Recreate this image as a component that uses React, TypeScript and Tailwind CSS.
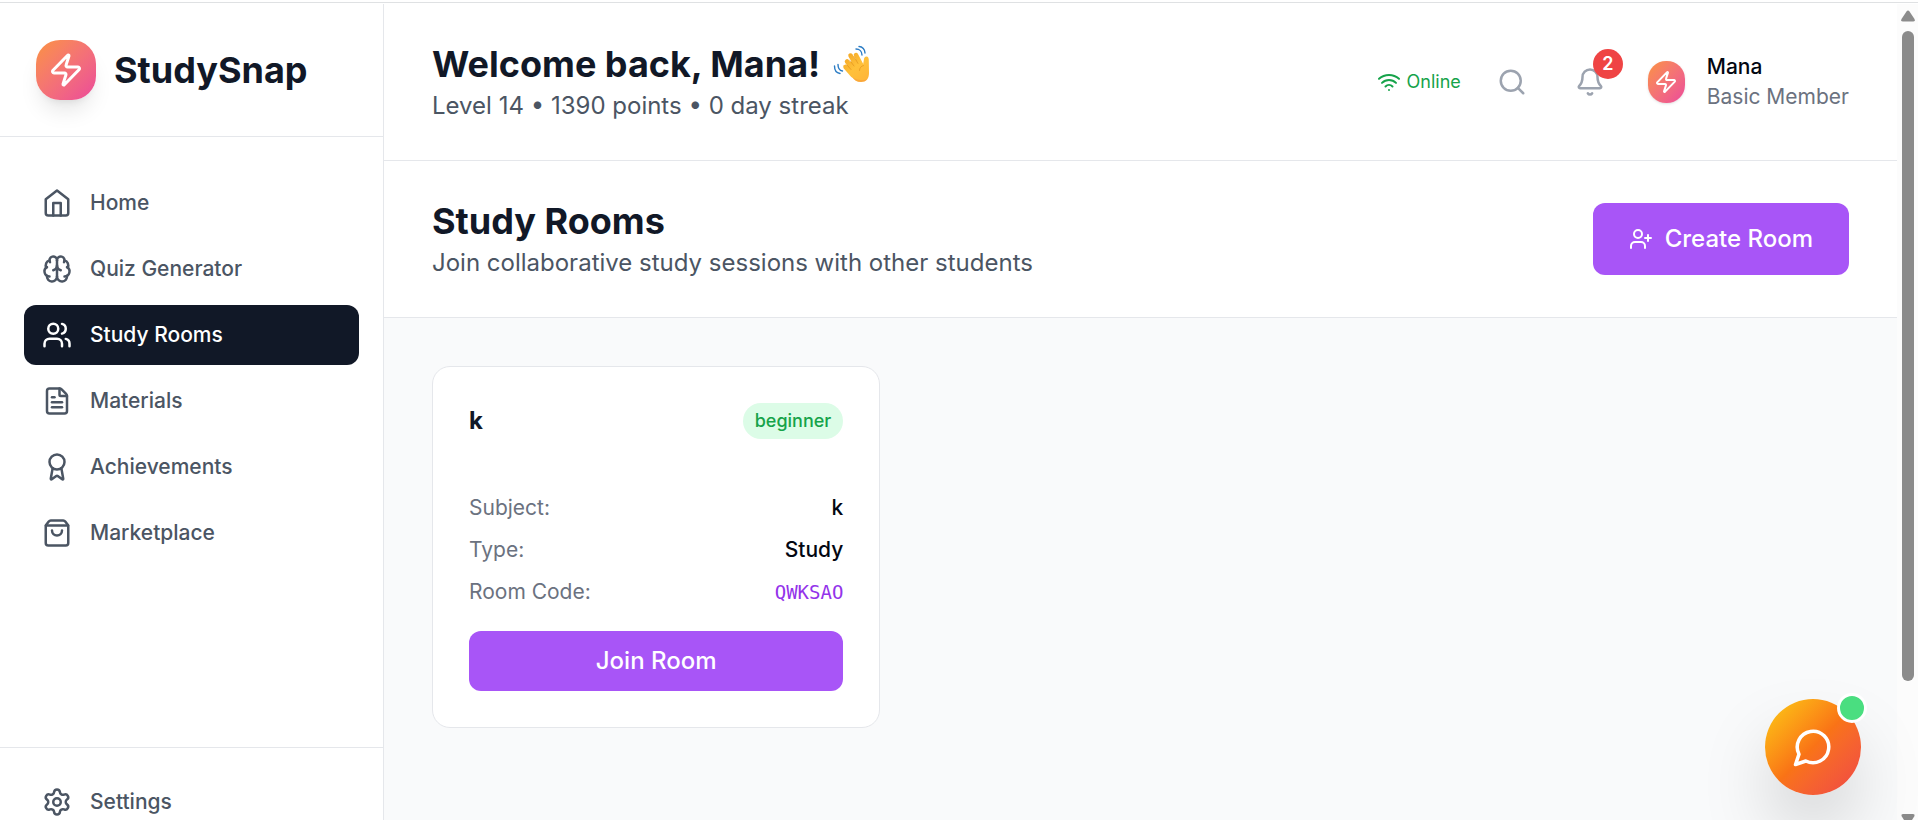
import {
  Award,
  Bell,
  Brain,
  FileText,
  Search,
  Settings,
  ShoppingBag,
  UserPlus,
  Users,
  Wifi,
  Zap,
  type LucideIcon,
} from "lucide-react";

type NavItem = {
  label: string;
  icon: LucideIcon | typeof HomeIcon;
  active?: boolean;
};

type Room = {
  name: string;
  level: string;
  subject: string;
  type: string;
  code: string;
};

const navItems: NavItem[] = [
  { label: "Home", icon: HomeIcon },
  { label: "Quiz Generator", icon: Brain },
  { label: "Study Rooms", icon: Users, active: true },
  { label: "Materials", icon: FileText },
  { label: "Achievements", icon: Award },
  { label: "Marketplace", icon: ShoppingBag },
];

const rooms: Room[] = [
  { name: "k", level: "beginner", subject: "k", type: "Study", code: "QWKSAO" },
];

function HomeIcon({ className }: { className?: string }) {
  return (
    <svg
      viewBox="0 0 24 24"
      fill="none"
      stroke="currentColor"
      strokeWidth="2"
      strokeLinecap="round"
      strokeLinejoin="round"
      className={className}
    >
      <path d="m3 9 9-7 9 7v11a2 2 0 0 1-2 2H5a2 2 0 0 1-2-2z" />
      <path d="M9 22V12h6v10" />
    </svg>
  );
}

function ChatIcon({ className }: { className?: string }) {
  return (
    <svg
      viewBox="0 0 24 24"
      fill="none"
      stroke="currentColor"
      strokeWidth="2"
      strokeLinecap="round"
      strokeLinejoin="round"
      className={className}
    >
      <path d="M7.900 20A9 9 0 1 0 4 16.100L2 22Z" />
    </svg>
  );
}

function WaveHand() {
  return (
    <svg viewBox="13 9 40 40" className="size-10" role="img" aria-label="waving hand">
      <defs>
        <linearGradient id="skin" gradientUnits="userSpaceOnUse" x1="25" y1="20" x2="48" y2="44">
          <stop offset="0" stopColor="#f3a624" />
          <stop offset="0.5" stopColor="#ffc13a" />
          <stop offset="1" stopColor="#ffb638" />
        </linearGradient>
      </defs>
      <path
        d="M28 34 33 42c2 3 5 5 9 5 5 0 8-3 8-9l-.2-13c0-2-.8-3.600-2.300-3.600-1.700 0-2.500 1.300-2.600 3.200L44 30 37 24 29 28z"
        fill="url(#skin)"
      />
      <g stroke="url(#skin)" strokeLinecap="round" fill="none">
        <path d="m26.500 32 7 8" strokeWidth="4.500" />
        <path d="m28 26.500 8 10" strokeWidth="4.500" />
        <path d="m31.500 20.500 7.500 12.500" strokeWidth="4.500" />
        <path d="m37 20 5.500 10.500" strokeWidth="4.500" />
      </g>
      <g stroke="#d98413" strokeWidth="0.7" strokeLinecap="round" fill="none" opacity="0.7">
        <path d="m28 30 4 4.500" />
        <path d="m30.500 25 4.500 6" />
        <path d="m35 21.500 4 7" />
        <path d="M44.500 30.500c-2.500.5-4 2.500-4 5" />
      </g>
      <path d="M33 42c2 3 5 5 9 5 3 0 5-1 6.500-3-3 1.500-9 2-15.500-2z" fill="#f08a3c" opacity="0.35" />
      <g stroke="#2b7cc4" strokeWidth="1.400" strokeLinecap="round" fill="none">
        <path d="M40 11.500c3.500 0 6 3 6 6.500" />
        <path d="M37 14c3.500 0 6 2.500 6 6" />
        <path d="M15.500 31c0 4 2 7 5.500 7.500" />
        <path d="M19 29.500c0 3.500 1.500 6 4.500 6.500" />
      </g>
    </svg>
  );
}

function Sidebar() {
  return (
    <aside className="flex w-96 shrink-0 flex-col border-r border-[#e5e7eb] bg-white">
      <div className="flex items-center gap-[18px] border-b border-[#e5e7eb] p-9">
        <div className="flex size-[60px] items-center justify-center rounded-3xl bg-linear-to-br from-[#fb923c] to-[#ec4899] shadow-[0_15px_22px_-5px_rgba(0,0,0,0.1),0_6px_9px_-6px_rgba(0,0,0,0.1)]">
          <Zap className="size-9 text-white" />
        </div>
        <span className="text-4xl font-bold text-[#111827]">StudySnap</span>
      </div>
      <nav className="flex flex-1 flex-col gap-[6px] px-6 py-9">
        {navItems.map(({ label, icon: Icon, active }) => (
          <a
            key={label}
            href="#"
            aria-current={active ? "page" : undefined}
            className={
              active
                ? "flex h-[60px] items-center gap-[18px] rounded-xl bg-[#111827] px-[18px] text-[21px] font-medium text-white"
                : "flex h-[60px] items-center gap-[18px] rounded-xl px-[18px] text-[21px] font-medium text-[#4b5563]"
            }
          >
            <Icon className="size-[30px]" />
            {label}
          </a>
        ))}
      </nav>
      <div className="h-[73px] shrink-0 overflow-hidden border-t border-[#e5e7eb] px-6 pt-6">
        <a
          href="#"
          className="flex h-[60px] items-center gap-[18px] rounded-xl px-[18px] text-[21px] font-medium text-[#4b5563]"
        >
          <Settings className="size-[30px]" />
          Settings
        </a>
      </div>
    </aside>
  );
}

function TopBar() {
  return (
    <header className="flex items-center justify-between border-b border-[#e5e7eb] bg-white px-12 py-9">
      <div>
        <h1 className="flex items-center gap-3 text-[36px] leading-[48px] font-bold text-[#111827]">
          Welcome back, Mana!
          <WaveHand />
        </h1>
        <p className="text-[24px] leading-[36px] text-[#4b5563]">
          Level 14 • 1390 points • 0 day streak
        </p>
      </div>
      <div className="flex items-center gap-6">
        <div className="flex items-center gap-[6px] text-[18px] leading-6 text-[#16a34a]">
          <Wifi className="size-6" />
          Online
        </div>
        <button type="button" aria-label="Search" className="p-3 text-[#9ca3af]">
          <Search className="size-[30px]" />
        </button>
        <button type="button" aria-label="Notifications" className="relative p-3 text-[#9ca3af]">
          <Bell className="size-[30px]" />
          <span className="absolute -top-[6px] -right-[6px] flex size-[30px] items-center justify-center rounded-full bg-[#ef4444] text-[18px] leading-6 font-semibold text-white">
            2
          </span>
        </button>
        <div className="flex items-center gap-[22px] pl-[7px]">
          <div className="flex h-[42px] w-[37px] items-center justify-center rounded-[18px] bg-linear-to-br from-[#fb923c] to-[#ec4899] shadow-sm">
            <Zap className="size-6 text-white" />
          </div>
          <div className="text-[21px] leading-[30px]">
            <p className="font-medium text-[#030712]">Mana</p>
            <p className="text-[#6b7280]">Basic Member</p>
          </div>
        </div>
      </div>
    </header>
  );
}

function RoomCard({ room }: { room: Room }) {
  return (
    <article className="rounded-[18px] border border-[#e5e7eb] bg-white p-9">
      <div className="mb-[54px] flex items-center justify-between">
        <h3 className="text-[24px] leading-[36px] font-bold text-[#111827]">{room.name}</h3>
        <span className="rounded-full bg-[#dcfce7] px-3 py-[6px] text-[18px] leading-6 font-medium text-[#16a34a]">
          {room.level}
        </span>
      </div>
      <dl className="mb-6 flex flex-col gap-3 text-[21px] leading-[30px]">
        <div className="flex justify-between">
          <dt className="text-[#6b7280]">Subject:</dt>
          <dd className="font-medium text-[#030712]">{room.subject}</dd>
        </div>
        <div className="flex justify-between">
          <dt className="text-[#6b7280]">Type:</dt>
          <dd className="font-medium text-[#030712]">{room.type}</dd>
        </div>
        <div className="flex justify-between">
          <dt className="text-[#6b7280]">Room Code:</dt>
          <dd className="font-['DejaVu_Sans_Mono',monospace] text-[19px] text-[#9333ea]">
            {room.code}
          </dd>
        </div>
      </dl>
      <button
        type="button"
        className="h-[60px] w-full rounded-xl bg-[#a855f7] text-[24px] leading-[36px] font-medium text-white"
      >
        Join Room
      </button>
    </article>
  );
}

function ScrollRail() {
  return (
    <div className="flex w-[21px] shrink-0 flex-col items-center bg-[#fcfcfc]">
      <svg viewBox="0 0 14 12" className="mt-[6px] h-3 w-[14px]" fill="#8b8b8b">
        <path d="M5.500 1.500Q7-.5 8.500 1.500L13.500 9Q14.500 11.500 12 11.500H2Q-.5 11.500 .5 9z" />
      </svg>
      <div className="mt-[9px] h-[650px] w-3 rounded-full bg-[#8b8b8b]" />
      <div className="flex-1" />
      <svg viewBox="0 0 14 6" className="h-[6px] w-[14px]" fill="#8b8b8b">
        <path d="M2 0H12Q14 0 13.500 2L11 6H3L.5 2Q0 0 2 0z" />
      </svg>
    </div>
  );
}

export default function App() {
  return (
    <div className="flex h-screen flex-col overflow-hidden bg-white font-[Inter,sans-serif] text-[#030712]">
      <div className="h-[3px] shrink-0 border-b border-[#dfe1e3]" />
      <div className="flex min-h-0 flex-1 pt-px">
        <Sidebar />
        <main className="relative min-w-0 flex-1 bg-[#f9fafb]">
          <TopBar />
          <section className="flex items-center justify-between border-b border-[#e5e7eb] bg-white px-12 py-9">
            <div>
              <h2 className="text-[36px] leading-[48px] font-bold text-[#111827]">Study Rooms</h2>
              <p className="text-[24px] leading-[36px] text-[#4b5563]">
                Join collaborative study sessions with other students
              </p>
            </div>
            <button
              type="button"
              className="flex h-[72px] items-center gap-3 rounded-xl bg-[#a855f7] px-9 text-[24px] leading-[36px] font-medium text-white"
            >
              <UserPlus className="size-6" />
              Create Room
            </button>
          </section>
          <div className="grid grid-cols-3 gap-9 p-12">
            {rooms.map((room) => (
              <RoomCard key={room.code} room={room} />
            ))}
          </div>
          <button
            type="button"
            aria-label="Open chat"
            className="absolute right-9 bottom-[25px] flex size-24 items-center justify-center rounded-full bg-linear-to-br from-[#facc15] via-[#f97316] to-[#ef4444] text-white shadow-[0_37px_75px_-12px_rgba(0,0,0,0.25)]"
          >
            <ChatIcon className="size-[42px]" />
            <span className="absolute -top-[6px] -right-[6px] size-[30px] rounded-full border-[3px] border-white bg-[#4ade80]" />
          </button>
        </main>
        <ScrollRail />
      </div>
    </div>
  );
}
